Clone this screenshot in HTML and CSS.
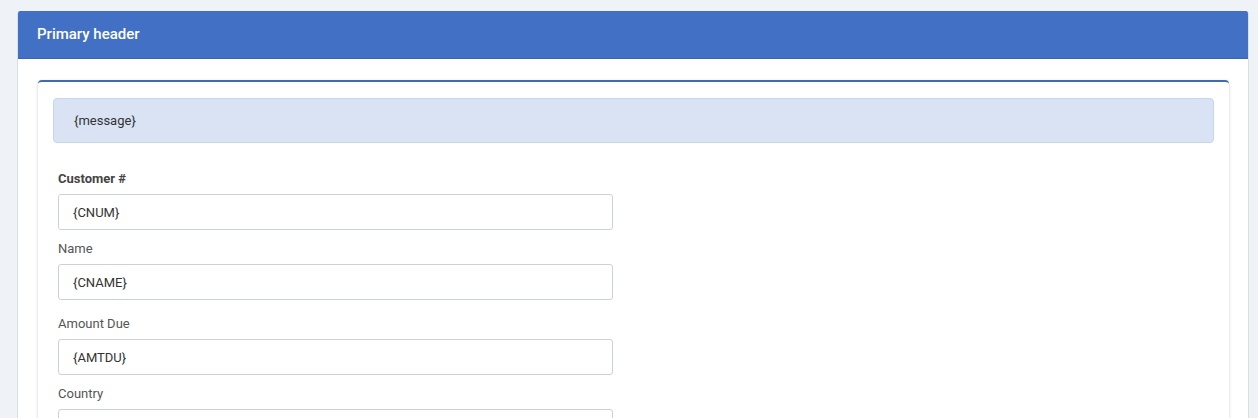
FILE: index.html
```html
<!DOCTYPE html>
<html lang="en">
<head>
    <meta charset="UTF-8" />
    <meta name="viewport" content="width=device-width, initial-scale=1.0" />
    <title>Primary header</title>
    <link rel="stylesheet" href="styles.css">
</head>
<body>

<div class="panel">
    <div class="panel-header">Primary header</div>
    <div class="panel-body">
        <div class="box">
            <div class="alert">{message}</div>

            <form class="form" action="#" onsubmit="event.preventDefault();">
                <div class="field">
                    <label class="bold" for="cnum">Customer #</label>
                    <input type="text" id="cnum" name="cnum" value="{CNUM}" />
                </div>
                <div class="field field-spaced">
                    <label for="cname">Name</label>
                    <input type="text" id="cname" name="cname" value="{CNAME}" />
                </div>
                <div class="field">
                    <label for="amtdu">Amount Due</label>
                    <input type="text" id="amtdu" name="amtdu" value="{AMTDU}" />
                </div>
                <div class="field">
                    <label for="country">Country</label>
                    <input type="text" id="country" name="country" value="" />
                </div>
            </form>
        </div>
    </div>
</div>

</body>
</html>
```

FILE: styles.css
```css
body {
    font-family: Roboto, "Liberation Sans", sans-serif;
    background: #eff3f7;
    margin: 0;
    padding: 11px 9px 0 17px;
    color: #333;
}
.panel {
    background-color: #fff;
    border: 1px solid #dadfe5;
    border-top: none;
    border-bottom: none;
    border-radius: 3px 3px 0 0;
    overflow: hidden;
}
.panel-header {
    background-color: #4170c4;
    color: #fff;
    font-size: 15px;
    font-weight: 500;
    height: 47px;
    line-height: 46px;
    padding: 0 19px;
    border-bottom: 1px solid #3a64ad;
}
.panel-body {
    padding: 21px 19px 0 20px;
}
.box {
    border-top: 2px solid #3c6db0;
    border-radius: 4px 4px 0 0;
    box-shadow: 0 1px 3px rgba(0,0,0,0.22);
    padding: 16px 15px 20px 15px;
    height: 400px;
}
.alert {
    background-color: #d9e3f3;
    border: 1px solid #c5d5ee;
    border-radius: 4px;
    height: 43px;
    line-height: 43px;
    padding: 0 20px;
    font-size: 13px;
    color: #333;
}
.form {
    padding: 27px 5px 0 5px;
}
.field {
    margin-bottom: 10px;
}
.field-spaced {
    margin-bottom: 15px;
}
label {
    display: block;
    font-size: 13px;
    line-height: 16px;
    padding-top: 1px;
    margin-bottom: 7px;
    color: #555;
}
label.bold {
    font-weight: bold;
    color: #444;
}
input {
    display: block;
    width: 555px;
    height: 36px;
    padding: 0 14px;
    border: 1px solid #ccd1d7;
    border-radius: 3px;
    box-sizing: border-box;
    font-family: inherit;
    font-size: 13px;
    color: #333;
    outline: none;
}
```
